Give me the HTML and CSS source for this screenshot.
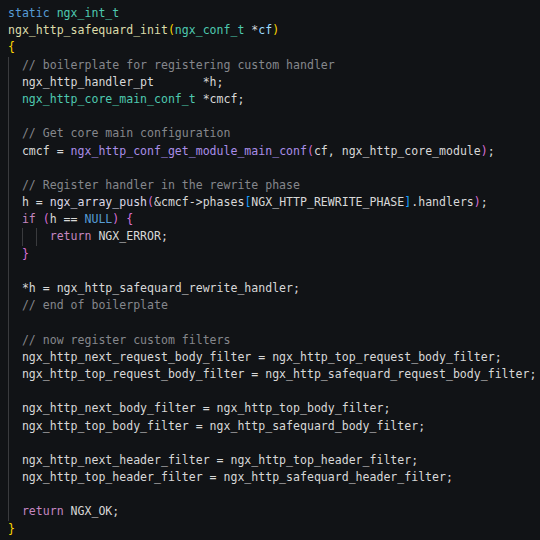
FILE: index.html
```html
<!DOCTYPE html>
<html>
<head>
<meta charset="utf-8">
<link rel="stylesheet" href="styles.css">
</head>
<body>
<div class="code">
<div class="ln"><span class="kw">static</span> <span class="ty">ngx_int_t</span></div>
<div class="ln"><span class="fn">ngx_http_safequard_init</span><span class="b1">(</span><span class="ty">ngx_conf_t</span> *<span class="var">cf</span><span class="b1">)</span></div>
<div class="ln"><span class="b1">{</span></div>
<div class="ln"><span class="i">  </span><span class="cm">// boilerplate for registering custom handler</span></div>
<div class="ln"><span class="i">  </span>ngx_http_handler_pt       *h;</div>
<div class="ln"><span class="i">  </span><span class="ty">ngx_http_core_main_conf_t</span> *cmcf;</div>
<div class="ln"><span class="i">  </span></div>
<div class="ln"><span class="i">  </span><span class="cm">// Get core main configuration</span></div>
<div class="ln"><span class="i">  </span>cmcf = <span class="mac">ngx_http_conf_get_module_main_conf</span><span class="b2">(</span>cf, ngx_http_core_module<span class="b2">)</span>;</div>
<div class="ln"><span class="i">  </span></div>
<div class="ln"><span class="i">  </span><span class="cm">// Register handler in the rewrite phase</span></div>
<div class="ln"><span class="i">  </span>h = <span class="fn2">ngx_array_push</span><span class="b2">(</span>&amp;cmcf-&gt;phases<span class="b3">[</span>NGX_HTTP_REWRITE_PHASE<span class="b3">]</span>.handlers<span class="b2">)</span>;</div>
<div class="ln"><span class="i">  </span><span class="ctl">if</span> <span class="b2">(</span>h == <span class="kw">NULL</span><span class="b2">)</span> <span class="b2">{</span></div>
<div class="ln"><span class="i">  </span><span class="i">  </span><span class="i">  </span><span class="ctl">return</span> NGX_ERROR;</div>
<div class="ln"><span class="i">  </span><span class="b2">}</span></div>
<div class="ln"><span class="i">  </span></div>
<div class="ln"><span class="i">  </span>*h = ngx_http_safequard_rewrite_handler;</div>
<div class="ln"><span class="i">  </span><span class="cm">// end of boilerplate</span></div>
<div class="ln"><span class="i">  </span></div>
<div class="ln"><span class="i">  </span><span class="cm">// now register custom filters</span></div>
<div class="ln"><span class="i">  </span>ngx_http_next_request_body_filter = ngx_http_top_request_body_filter;</div>
<div class="ln"><span class="i">  </span>ngx_http_top_request_body_filter = ngx_http_safequard_request_body_filter;</div>
<div class="ln"><span class="i">  </span></div>
<div class="ln"><span class="i">  </span>ngx_http_next_body_filter = ngx_http_top_body_filter;</div>
<div class="ln"><span class="i">  </span>ngx_http_top_body_filter = ngx_http_safequard_body_filter;</div>
<div class="ln"><span class="i">  </span></div>
<div class="ln"><span class="i">  </span>ngx_http_next_header_filter = ngx_http_top_header_filter;</div>
<div class="ln"><span class="i">  </span>ngx_http_top_header_filter = ngx_http_safequard_header_filter;</div>
<div class="ln"><span class="i">  </span></div>
<div class="ln"><span class="i">  </span><span class="ctl">return</span> NGX_OK;</div>
<div class="ln"><span class="b1">}</span></div>
</div>
</body>
</html>
```

FILE: styles.css
```css
html, body {
  margin: 0;
  background: #111316;
  height: 100%;
}
.code {
  padding: 5px 0 0 8px;
  font-family: "DejaVu Sans Mono", "Liberation Mono", monospace;
  font-size: 11.55px;
  line-height: 17.2px;
  color: #d8d8d8;
}
.ln {
  height: 17.2px;
  white-space: pre;
}
.i {
  display: inline-block;
  height: 17.2px;
  vertical-align: top;
  box-shadow: inset 1px 0 0 #3a3b3e;
}
.kw { color: #569cd6; }
.ty { color: #4ec9b0; }
.fn { color: #dcdcaa; }
.fn2 { color: #dcd8e6; }
.var { color: #9cdcfe; }
.cm { color: #85878c; }
.ctl { color: #c586c0; }
.mac { color: #a98ee8; }
.b1 { color: #ffd700; }
.b2 { color: #da70d6; }
.b3 { color: #179fff; }
```
